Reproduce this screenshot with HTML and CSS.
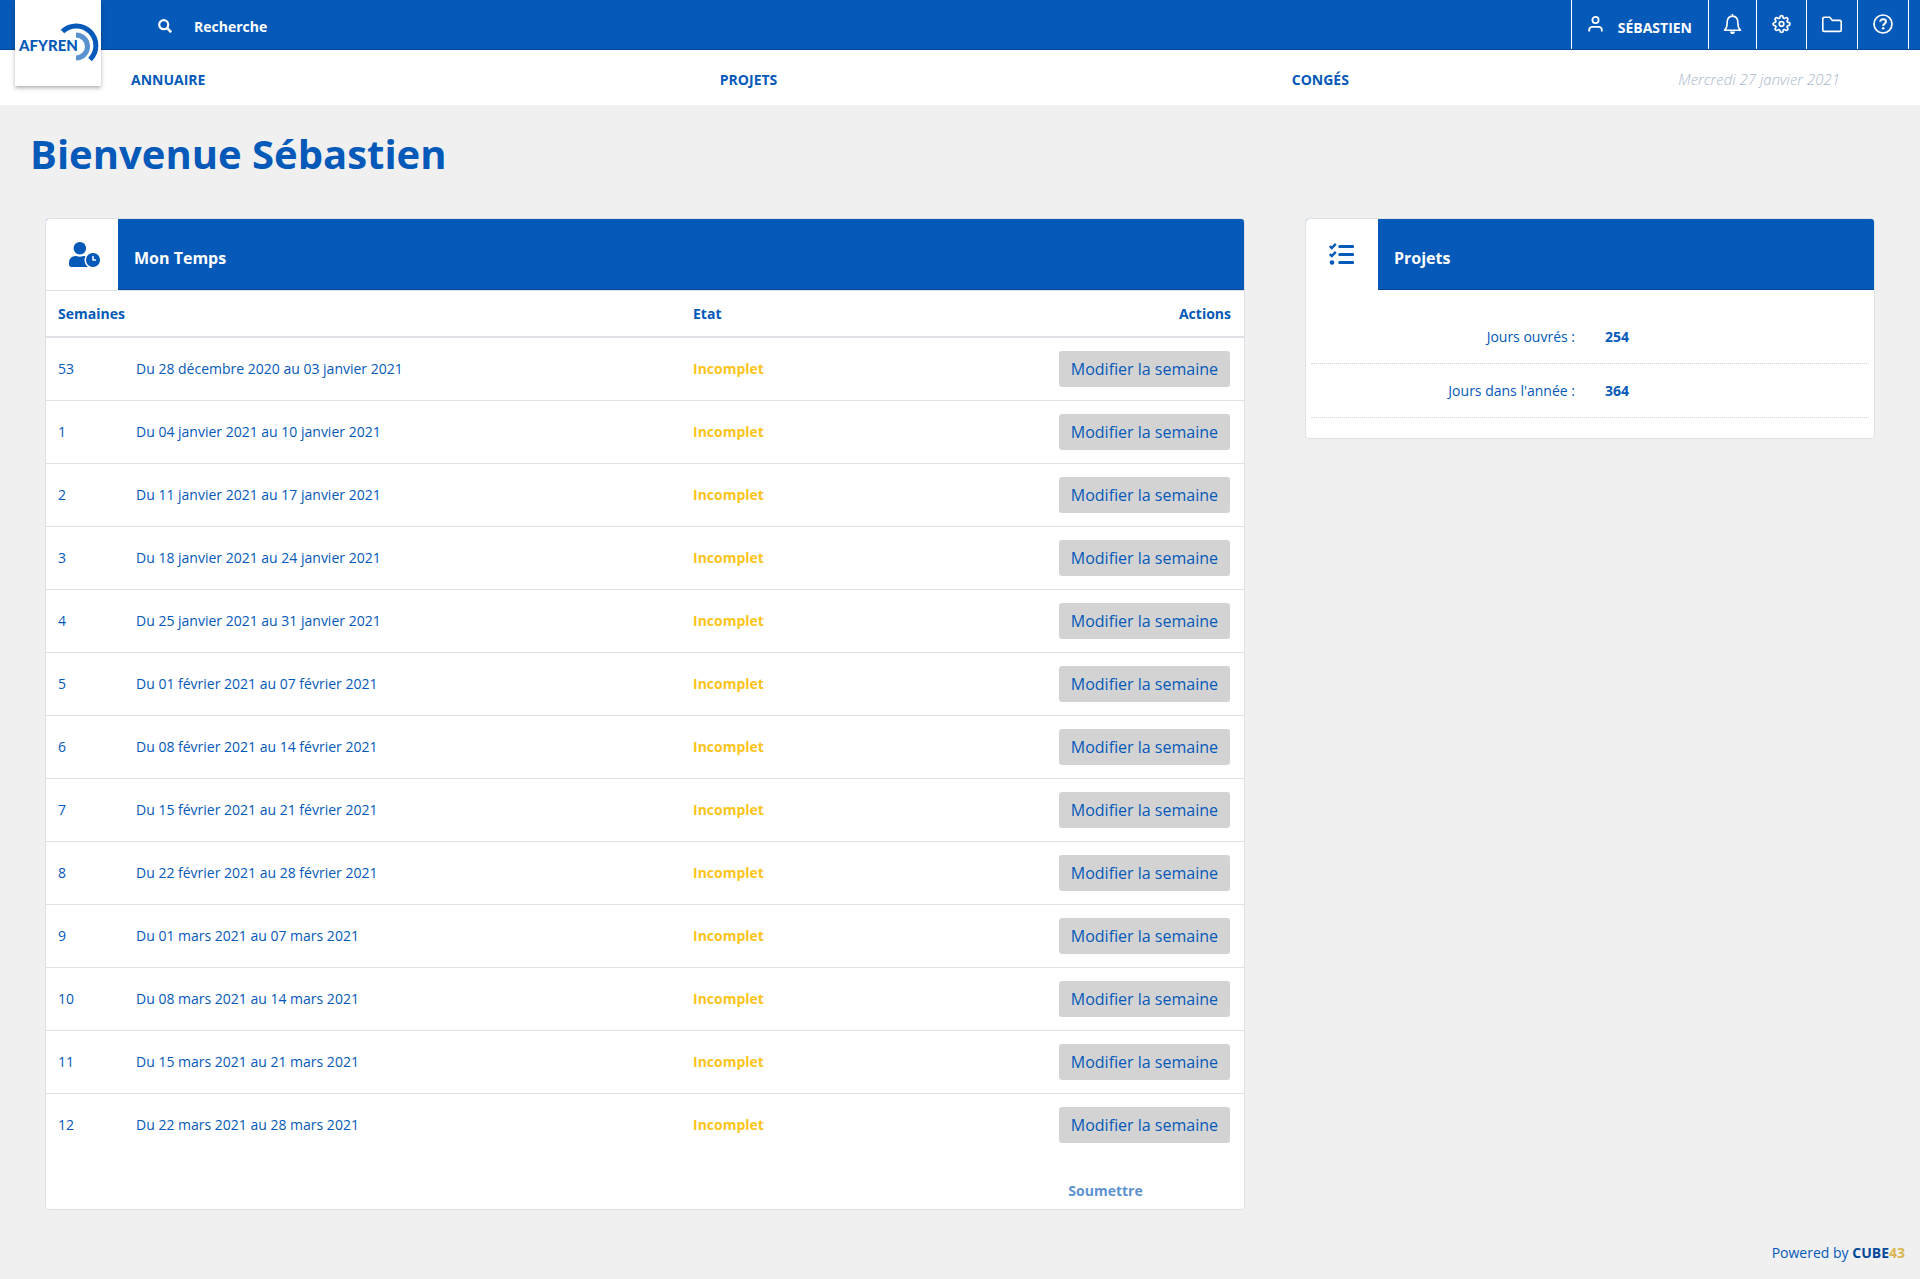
FILE: index.html
```html
<!DOCTYPE html>
<html lang="fr">
<head>
<meta charset="utf-8">
<meta name="viewport" content="width=device-width, initial-scale=1">
<title>AFYREN - Accueil</title>
<link rel="stylesheet" href="styles.css">
</head>
<body>
<header class="site-header">
  <a class="logo" href="#" aria-label="AFYREN">
    <svg viewBox="0 0 86 86" width="86" height="86">
      <text class="logo-text" x="4" y="51">AFYREN</text>
      <path d="M47.5 31.5A19.5 19.5 0 0 1 75 59.5" fill="none" stroke="#0559b9" stroke-width="5"/>
      <path d="M61 35a11.5 11.5 0 0 1 0 23" fill="none" stroke="#5a92d0" stroke-width="5"/>
    </svg>
  </a>
  <div class="topbar">
    <form class="search">
      <label for="search" aria-label="Recherche">
        <svg width="14" height="14" viewBox="0 0 14 14" fill="none" stroke="currentColor"><circle cx="5.7" cy="5.7" r="4.5" stroke-width="2.2"/><path d="M9 9l4.2 4.2" stroke-width="2.6"/></svg>
      </label>
      <input id="search" class="search-input" type="text" placeholder="Recherche">
    </form>
    <div class="tools">
      <button class="tool tool-user" type="button">
        <svg width="15" height="16" viewBox="0 0 15 16" fill="none" stroke="currentColor" stroke-width="1.8"><circle cx="7.5" cy="4" r="3.1"/><path d="M1.2 15.5v-1.7a2.9 2.9 0 0 1 2.9-2.9h6.8a2.9 2.9 0 0 1 2.9 2.9v1.7"/></svg>
        <span class="tool-name">SÉBASTIEN</span>
      </button>
      <button class="tool" type="button" aria-label="Notifications">
        <svg width="19" height="20" viewBox="0 0 19 20" fill="none" stroke="currentColor" stroke-width="1.6" stroke-linejoin="round"><path d="M9.5 0v2M1.6 16.2c1.8-1.6 2.5-3.4 2.5-6.9 0-4.500 2-7.200 5.400-7.200s5.400 2.700 5.400 7.200c0 3.500.7 5.300 2.500 6.900z"/><path d="M7 17.600h5a2.500 2.500 0 0 1-5 0z" fill="currentColor" stroke="none"/></svg>
      </button>
      <button class="tool" type="button" aria-label="Paramètres">
        <svg width="21" height="20" viewBox="-1 -1 26 26" fill="none" stroke="currentColor" stroke-width="2.2"><circle cx="12" cy="12" r="3"/><path d="M19.400 15a1.650 1.650 0 0 0 .33 1.820l.06.06a2 2 0 0 1 0 2.830 2 2 0 0 1-2.830 0l-.06-.06a1.650 1.650 0 0 0-1.820-.33 1.650 1.650 0 0 0-1 1.510V21a2 2 0 0 1-2 2 2 2 0 0 1-2-2v-.09A1.650 1.650 0 0 0 9 19.400a1.650 1.650 0 0 0-1.820.33l-.06.06a2 2 0 0 1-2.830 0 2 2 0 0 1 0-2.830l.06-.06a1.650 1.650 0 0 0 .33-1.820 1.650 1.650 0 0 0-1.510-1H3a2 2 0 0 1-2-2 2 2 0 0 1 2-2h.09A1.650 1.650 0 0 0 4.600 9a1.650 1.650 0 0 0-.33-1.820l-.06-.06a2 2 0 0 1 0-2.830 2 2 0 0 1 2.830 0l.06.06a1.650 1.650 0 0 0 1.820.33H9a1.650 1.650 0 0 0 1-1.510V3a2 2 0 0 1 2-2 2 2 0 0 1 2 2v.09a1.650 1.650 0 0 0 1 1.510 1.650 1.650 0 0 0 1.820-.33l.06-.06a2 2 0 0 1 2.830 0 2 2 0 0 1 0 2.830l-.06.06a1.650 1.650 0 0 0-.33 1.820V9a1.650 1.650 0 0 0 1.510 1H21a2 2 0 0 1 2 2 2 2 0 0 1-2 2h-.09a1.650 1.650 0 0 0-1.510 1z"/></svg>
      </button>
      <button class="tool" type="button" aria-label="Dossiers">
        <svg width="22" height="20" viewBox="0 0 22 20" fill="none" stroke="currentColor" stroke-width="1.6" stroke-linejoin="round"><path d="M3 3.300h5.800l2.600 3.100H19a1.200 1.200 0 0 1 1.200 1.200v8.600a1.200 1.200 0 0 1-1.200 1.200H3a1.200 1.200 0 0 1-1.200-1.200V4.500A1.200 1.200 0 0 1 3 3.300z"/></svg>
      </button>
      <button class="tool" type="button" aria-label="Aide">
        <svg width="22" height="20" viewBox="0 0 22 20" fill="none" stroke="currentColor"><circle cx="11" cy="10" r="9" stroke-width="1.700"/><path d="M8.200 7.800c0-1.600 1.200-2.600 2.900-2.600s2.900 1 2.900 2.400c0 2-2.800 2.100-2.800 4.300" stroke-width="2"/><circle cx="11.200" cy="14.300" r="1.300" fill="currentColor" stroke="none"/></svg>
      </button>
      <span class="tools-end"></span>
    </div>
  </div>
  <nav class="mainnav">
    <ul class="mainnav-list">
      <li><a href="#">ANNUAIRE</a></li>
      <li><a href="#">PROJETS</a></li>
      <li><a href="#">CONGÉS</a></li>
    </ul>
    <span class="today">Mercredi 27 janvier 2021</span>
  </nav>
</header>

<main>
  <h1 class="page-title">Bienvenue Sébastien</h1>
  <div class="columns">
    <section class="card">
      <div class="card-header">
        <span class="card-icon"><svg width="31" height="25" viewBox="0 0 640 512" fill="currentColor"><path d="M496 224c-79.600 0-144 64.400-144 144s64.400 144 144 144 144-64.400 144-144-64.400-144-144-144zm64 150.300c0 5.300-4.400 9.700-9.700 9.700h-60.600c-5.300 0-9.700-4.400-9.700-9.700v-76.600c0-5.300 4.400-9.700 9.700-9.700h12.600c5.300 0 9.700 4.400 9.700 9.700V352h38.300c5.300 0 9.700 4.400 9.700 9.700v12.600zM320 368c0-27.800 6.700-54.100 18.200-77.500-8-1.500-16.200-2.500-24.600-2.500h-16.700c-22.200 10.200-46.900 16-72.900 16s-50.600-5.800-72.900-16h-16.700C60.200 288 0 348.200 0 422.400V464c0 26.500 21.500 48 48 48h347.100c-45.300-31.900-75.100-84.500-75.100-144zm-96-112c70.700 0 128-57.300 128-128S294.700 0 224 0 96 57.300 96 128s57.300 128 128 128z"/></svg></span>
        <h2 class="card-title">Mon Temps</h2>
      </div>
      <table class="weeks">
        <colgroup><col class="col-week"><col class="col-dates"><col class="col-state"><col></colgroup>
        <thead>
          <tr><th colspan="2">Semaines</th><th>Etat</th><th class="actions">Actions</th></tr>
        </thead>
        <tbody>
          <tr><td>53</td><td>Du 28 décembre 2020 au 03 janvier 2021</td><td class="state">Incomplet</td><td class="actions"><button class="btn" type="button">Modifier la semaine</button></td></tr>
          <tr><td>1</td><td>Du 04 janvier 2021 au 10 janvier 2021</td><td class="state">Incomplet</td><td class="actions"><button class="btn" type="button">Modifier la semaine</button></td></tr>
          <tr><td>2</td><td>Du 11 janvier 2021 au 17 janvier 2021</td><td class="state">Incomplet</td><td class="actions"><button class="btn" type="button">Modifier la semaine</button></td></tr>
          <tr><td>3</td><td>Du 18 janvier 2021 au 24 janvier 2021</td><td class="state">Incomplet</td><td class="actions"><button class="btn" type="button">Modifier la semaine</button></td></tr>
          <tr><td>4</td><td>Du 25 janvier 2021 au 31 janvier 2021</td><td class="state">Incomplet</td><td class="actions"><button class="btn" type="button">Modifier la semaine</button></td></tr>
          <tr><td>5</td><td>Du 01 février 2021 au 07 février 2021</td><td class="state">Incomplet</td><td class="actions"><button class="btn" type="button">Modifier la semaine</button></td></tr>
          <tr><td>6</td><td>Du 08 février 2021 au 14 février 2021</td><td class="state">Incomplet</td><td class="actions"><button class="btn" type="button">Modifier la semaine</button></td></tr>
          <tr><td>7</td><td>Du 15 février 2021 au 21 février 2021</td><td class="state">Incomplet</td><td class="actions"><button class="btn" type="button">Modifier la semaine</button></td></tr>
          <tr><td>8</td><td>Du 22 février 2021 au 28 février 2021</td><td class="state">Incomplet</td><td class="actions"><button class="btn" type="button">Modifier la semaine</button></td></tr>
          <tr><td>9</td><td>Du 01 mars 2021 au 07 mars 2021</td><td class="state">Incomplet</td><td class="actions"><button class="btn" type="button">Modifier la semaine</button></td></tr>
          <tr><td>10</td><td>Du 08 mars 2021 au 14 mars 2021</td><td class="state">Incomplet</td><td class="actions"><button class="btn" type="button">Modifier la semaine</button></td></tr>
          <tr><td>11</td><td>Du 15 mars 2021 au 21 mars 2021</td><td class="state">Incomplet</td><td class="actions"><button class="btn" type="button">Modifier la semaine</button></td></tr>
          <tr><td>12</td><td>Du 22 mars 2021 au 28 mars 2021</td><td class="state">Incomplet</td><td class="actions"><button class="btn" type="button">Modifier la semaine</button></td></tr>
        </tbody>
      </table>
      <div class="submit-row">
        <button class="submit" type="button" disabled>Soumettre</button>
      </div>
    </section>

    <section class="card">
      <div class="card-header">
        <span class="card-icon"><svg width="25" height="25" viewBox="0 0 25 25" fill="none" stroke="currentColor"><path d="M10.700 4.500h13.100M10.700 12.500h13.100M10.700 20.500h13.100" stroke-width="3" stroke-linecap="round"/><path d="M.8 4l2 2L6.800 1.800M.8 12l2 2L6.800 9.800" stroke-width="2.400"/><circle cx="3" cy="20.500" r="2.300" fill="currentColor" stroke="none"/></svg></span>
        <h2 class="card-title">Projets</h2>
      </div>
      <dl class="stats">
        <div class="stat"><dt>Jours ouvrés :</dt><dd>254</dd></div>
        <div class="stat"><dt>Jours dans l'année :</dt><dd>364</dd></div>
      </dl>
    </section>
  </div>
</main>

<footer class="site-footer">Powered by <a href="#"><span class="brand">CUBE</span><span class="brand-number">43</span></a></footer>
</body>
</html>
```
FILE: styles.css
```css
:root {
  --blue: #0559b9;
  --dark-blue: #04499a;
  --line: #dee2e6;
}

* { box-sizing: border-box; }

body {
  margin: 0;
  background: #f0f0f0;
  color: var(--blue);
  font: 14px/21px "Open Sans", "Noto Sans", sans-serif;
}

a { color: inherit; text-decoration: none; }
button, input { font: inherit; color: inherit; border: 0; }
button { cursor: pointer; }
svg { display: block; }

/* Header */
.site-header { position: relative; background: #fff; }

.logo {
  position: absolute;
  top: 0;
  left: 15px;
  background: #fff;
  box-shadow: 0 2px 4px rgba(0, 0, 0, .3);
}

.logo-text {
  fill: var(--blue);
  font: 900 15px Lato, sans-serif;
}

.topbar {
  display: flex;
  justify-content: space-between;
  height: 50px;
  padding-left: 158px;
  background: var(--blue);
  border-bottom: 1px solid var(--dark-blue);
  color: #fff;
}

.search {
  display: flex;
  align-items: center;
  gap: 22px;
  padding-top: 3px;
}

.search-input {
  width: 240px;
  padding: 0;
  background: none;
  font-weight: 700;
  outline: 0;
}

.search-input::placeholder { color: #fff; opacity: 1; }

.tools { display: flex; }

.tool {
  display: flex;
  align-items: flex-start;
  padding: 14px 14px 0;
  background: none;
  border-left: 1px solid #fff;
}

.tool-user { gap: 15px; padding: 16px 16px 0; }
.tool-name { padding-top: 1px; font-weight: 700; }

.tools-end { width: 12px; border-left: 1px solid #fff; }

.mainnav {
  display: grid;
  grid-template-columns: 62fr 25fr;
  padding: 19px 80px 15px 131px;
}

.mainnav-list {
  display: flex;
  justify-content: space-between;
  margin: 0;
  padding: 0;
  list-style: none;
  font-weight: 700;
}

.today {
  justify-self: end;
  color: #a9b8ca;
  font-style: italic;
  font-size: 15px;
  font-weight: 300;
}

/* Content */
.page-title {
  margin: 25px 30px 40px;
  font-size: 40px;
  line-height: 48px;
}

.columns {
  display: grid;
  grid-template-columns: 40fr 19fr;
  gap: 60px;
  align-items: start;
  padding: 0 45px;
}

.card {
  overflow: hidden;
  background: #fff;
  border: 1px solid var(--line);
  border-radius: 4px;
}

.card-header {
  display: flex;
  background: var(--blue);
  color: #fff;
}

.card-icon {
  flex: 0 0 72px;
  padding: 23px 0 0 23px;
  background: #fff;
  color: var(--blue);
}

.card-title {
  flex: 1;
  margin: 0;
  padding: 27px 16px 19px;
  border-bottom: 1px solid var(--dark-blue);
  font-size: 16px;
  line-height: 24px;
}

.weeks {
  width: 100%;
  table-layout: fixed;
  border-spacing: 0;
}

.col-week { width: 78px; }
.col-dates { width: 557px; }
.col-state { width: 280px; }

.weeks th {
  padding: 12px;
  border-top: 1px solid var(--line);
  border-bottom: 2px solid var(--line);
  text-align: left;
}

.weeks td {
  padding: 12px 12px 14px;
  border-top: 1px solid var(--line);
}

.weeks tbody tr:first-child td { border-top: 0; }

.weeks th.actions { padding-right: 13px; text-align: right; }
.weeks td.actions { padding: 13px 14px 13px 0; text-align: right; }

.state { color: #fcc419; font-weight: 700; }

.btn {
  display: inline-block;
  padding: 6px 12px;
  background: #d3d3d3;
  border-radius: 3px;
  font-size: 16px;
  line-height: 24px;
  vertical-align: top;
}

.submit-row {
  display: grid;
  grid-template-columns: 10fr 2fr;
  margin-top: 16px;
}

.submit {
  grid-column: 2;
  justify-self: start;
  margin-left: 12px;
  padding: 8px 12px;
  background: none;
  color: var(--blue);
  font-weight: 700;
  opacity: .65;
}

.stats { margin: 0; padding: 20px 5px; }

.stat {
  display: grid;
  grid-template-columns: 1fr 1fr;
  gap: 30px;
  padding: 16px 0;
  border-bottom: 1px dotted #d3d3d3;
}

.stat dt { text-align: right; }
.stat dd { margin: 0; font-weight: 700; }

.site-footer {
  padding: 32px 15px 16px;
  text-align: right;
}

.brand { color: var(--dark-blue); font-weight: 700; }
.brand-number { color: #d9b650; font-weight: 700; }
```
